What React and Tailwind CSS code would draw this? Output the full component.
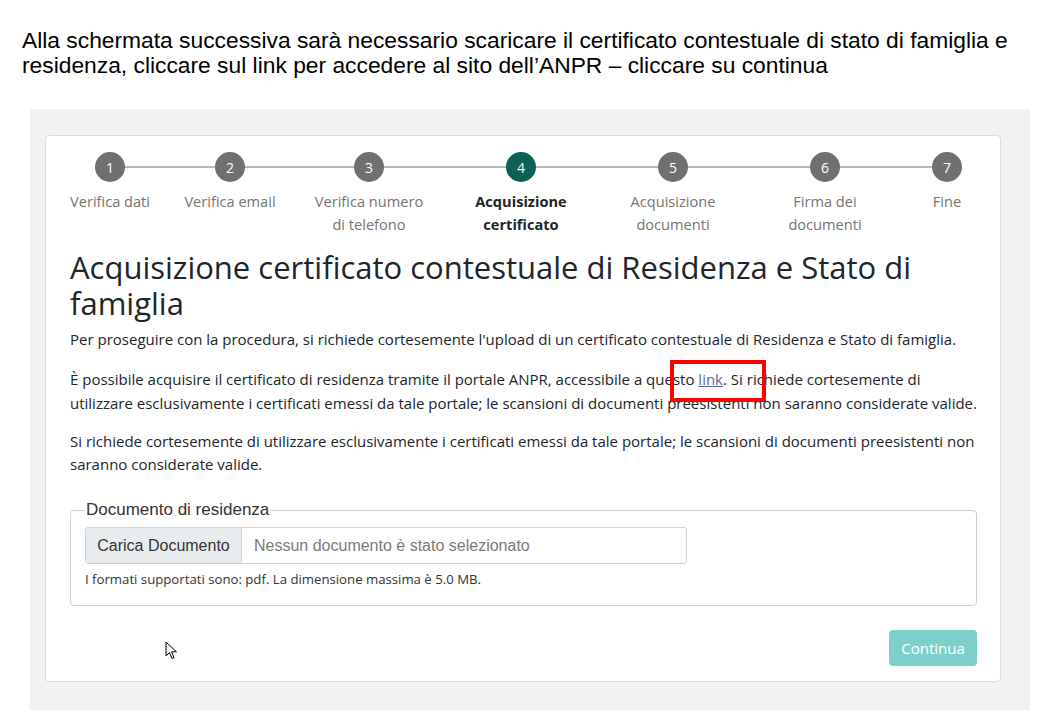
import React from "react";

const steps = [
  { n: 1, label: ["Verifica dati"], w: "w-[120px]" },
  { n: 2, label: ["Verifica email"], w: "w-[120px]" },
  { n: 3, label: ["Verifica numero", "di telefono"], w: "w-[158px]" },
  { n: 4, label: ["Acquisizione", "certificato"], w: "w-[146px]", active: true },
  { n: 5, label: ["Acquisizione", "documenti"], w: "w-[158px]" },
  { n: 6, label: ["Firma dei", "documenti"], w: "w-[146px]" },
  { n: 7, label: ["Fine"], w: "w-[98px]" },
];

const sans = { fontFamily: "'Open Sans', 'Noto Sans', sans-serif" };
const arial = { fontFamily: "'Liberation Sans', Arial, sans-serif" };

export default function App() {
  return (
    <div className="relative w-[1051px] h-[724px] bg-white overflow-hidden">
      <div className="pt-[28px] pl-[22px] text-[22.8px] leading-[24.5px] text-black whitespace-nowrap" style={arial}>
        Alla schermata successiva sarà necessario scaricare il certificato contestuale di stato di famiglia e
        <br />
        residenza, cliccare sul link per accedere al sito dell’ANPR – cliccare su continua
      </div>

      <div className="mt-[32px] ml-[30px] w-[1000px] bg-[#f2f2f2] pt-[26px] pb-[28px] pl-[15px]">
        <div
          className="w-[956px] bg-white border border-[#dcdcdc] rounded-[4px] pt-[16px] pb-[15px] pl-[24px] pr-[23px] text-[#212529]"
          style={sans}
        >
          {/* stepper */}
          <div className="relative flex -ml-[20px] -mr-[19px]">
            <div className="absolute top-[14px] left-[60px] right-[49px] h-[2px] bg-[#b8b8b8]" />
            {steps.map((s) => (
              <div key={s.n} className={`relative flex flex-col items-center ${s.w}`}>
                <div
                  className={`w-[30px] h-[30px] rounded-full flex items-center justify-center text-white text-[14px] ${
                    s.active ? "bg-[#0e5f56]" : "bg-[#707070]"
                  }`}
                >
                  {s.n}
                </div>
                <div
                  className={`mt-[8px] text-center text-[14.6px] leading-[23px] whitespace-nowrap ${
                    s.active ? "font-bold text-[#212529]" : "text-[#747474]"
                  }`}
                >
                  {s.label.map((l, i) => (
                    <div key={i}>{l}</div>
                  ))}
                </div>
              </div>
            ))}
          </div>

          <h3 className="mt-[13px] text-[31px] leading-[36px] font-medium text-[#212529] whitespace-nowrap">
            Acquisizione certificato contestuale di Residenza e Stato di
            <br />
            famiglia
          </h3>
          <p className="mt-[7px] text-[15px] leading-[23px] whitespace-nowrap">
            Per proseguire con la procedura, si richiede cortesemente l'upload di un certificato contestuale di Residenza e Stato di famiglia.
          </p>
          <p className="mt-[16px] text-[15px] leading-[24px] whitespace-nowrap">
            È possibile acquisire il certificato di residenza tramite il portale ANPR, accessibile a questo{" "}
            <a className="underline text-[#5f6aa3]">link</a>. Si richiede cortesemente di
            <br />
            utilizzare esclusivamente i certificati emessi da tale portale; le scansioni di documenti preesistenti non saranno considerate valide.
          </p>
          <p className="mt-[15px] text-[15px] leading-[23px] whitespace-nowrap">
            Si richiede cortesemente di utilizzare esclusivamente i certificati emessi da tale portale; le scansioni di documenti preesistenti non
            <br />
            saranno considerate valide.
          </p>

          <fieldset className="mt-[25px] border border-[#cfcfcf] rounded-[4px] px-[14px] pb-[18px] pt-[8px]" style={arial}>
            <legend className="px-[1px] text-[17px] text-[#333] leading-[18px]">Documento di residenza</legend>
            <div className="flex w-[602px] h-[37px] border border-[#ced4da] rounded-[3px] overflow-hidden">
              <div className="w-[156px] bg-[#e9ecef] border-r border-[#ced4da] flex items-center justify-center text-[16px] text-[#333]">
                Carica Documento
              </div>
              <div className="flex-1 flex items-center pl-[12px] text-[16px] text-[#7a7a7a]">
                Nessun documento è stato selezionato
              </div>
            </div>
            <div className="mt-[7px] text-[13.2px] leading-[16px] text-[#333]" style={sans}>
              I formati supportati sono: pdf. La dimensione massima è 5.0 MB.
            </div>
          </fieldset>

          <div className="flex justify-end mt-[24px]">
            <button className="w-[88px] h-[36px] rounded-[4px] bg-[#7dd0ca] text-white text-[15px]" style={sans}>
              Continua
            </button>
          </div>
        </div>
      </div>

      {/* red highlight box */}
      <div className="absolute left-[670px] top-[360px] w-[96px] h-[42px] border-[4px] border-[#ff0000]" />

      {/* mouse cursor */}
      <svg className="absolute left-[165px] top-[641px]" width="13" height="20" viewBox="0 0 13 20">
        <path
          d="M1 1 L1 15 L4.5 11.5 L7 17.5 L9 16.6 L6.6 10.8 L11.5 10.8 Z"
          fill="white"
          stroke="black"
          strokeWidth="1"
          strokeLinejoin="round"
        />
      </svg>
    </div>
  );
}
